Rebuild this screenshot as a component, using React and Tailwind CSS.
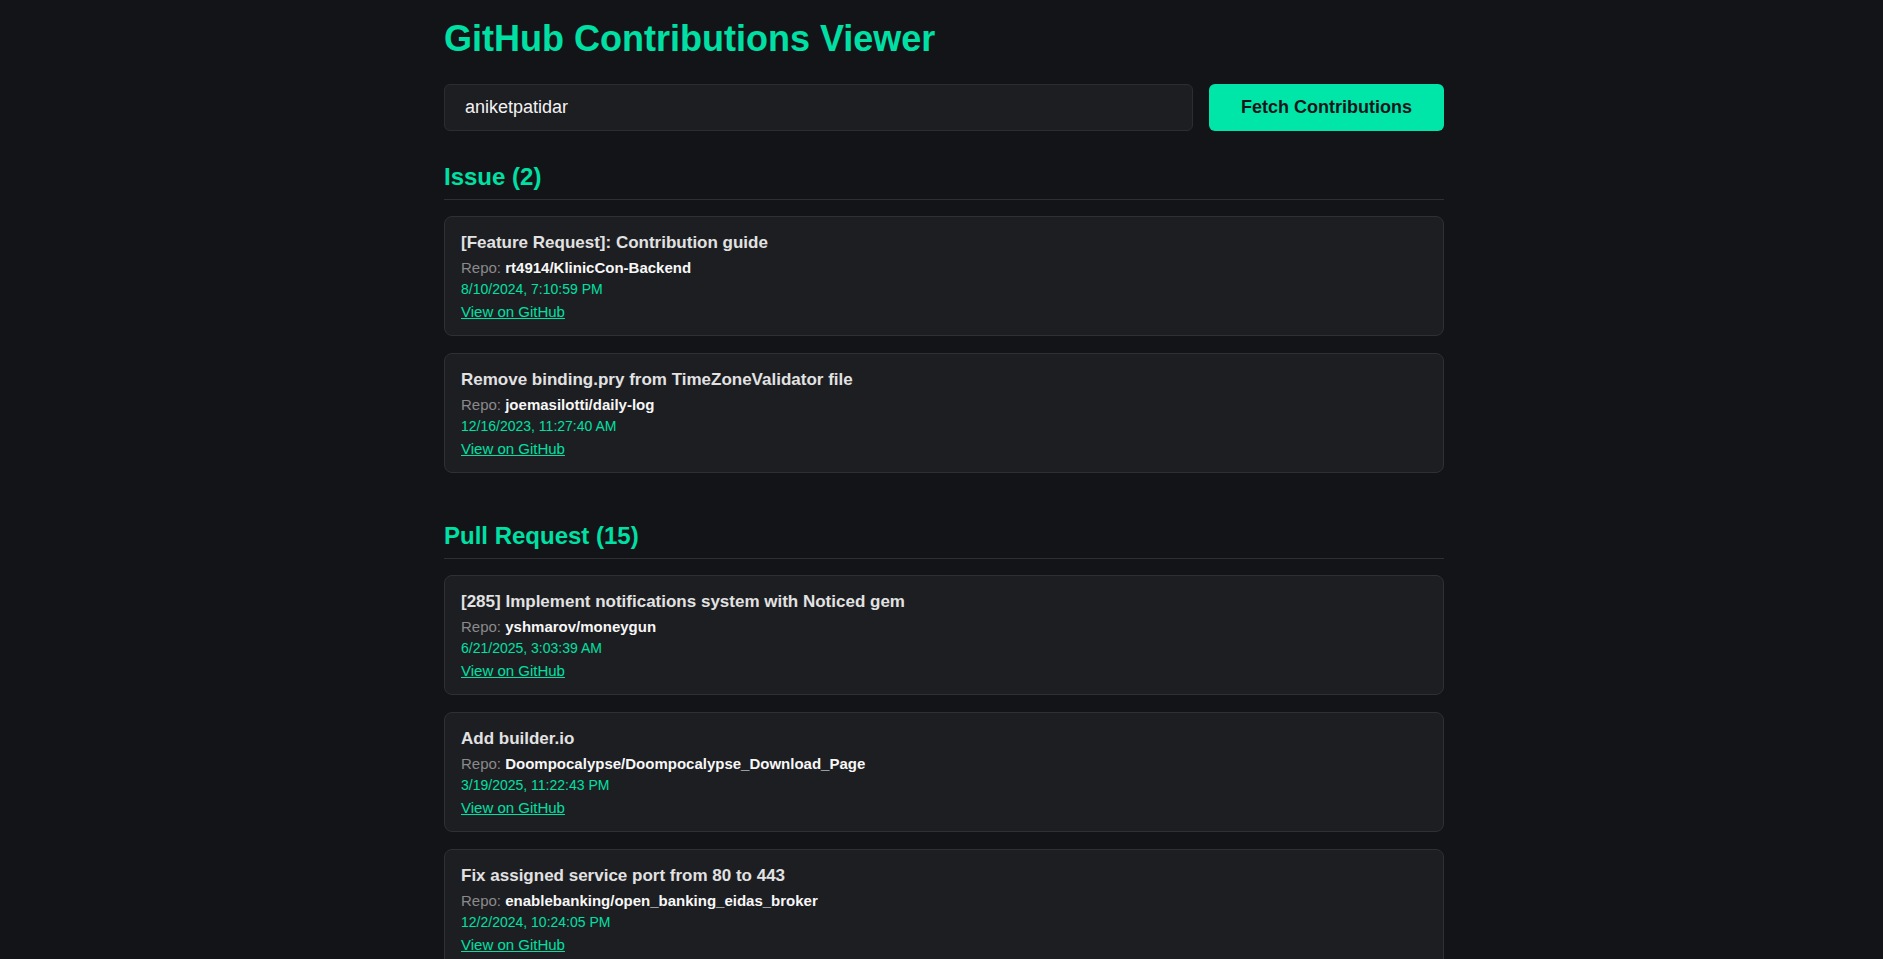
import React from "react";

const issues = [
  {
    title: "[Feature Request]: Contribution guide",
    repo: "rt4914/KlinicCon-Backend",
    date: "8/10/2024, 7:10:59 PM",
  },
  {
    title: "Remove binding.pry from TimeZoneValidator file",
    repo: "joemasilotti/daily-log",
    date: "12/16/2023, 11:27:40 AM",
  },
];

const pulls = [
  {
    title: "[285] Implement notifications system with Noticed gem",
    repo: "yshmarov/moneygun",
    date: "6/21/2025, 3:03:39 AM",
  },
  {
    title: "Add builder.io",
    repo: "Doompocalypse/Doompocalypse_Download_Page",
    date: "3/19/2025, 11:22:43 PM",
  },
  {
    title: "Fix assigned service port from 80 to 443",
    repo: "enablebanking/open_banking_eidas_broker",
    date: "12/2/2024, 10:24:05 PM",
  },
];

function Card({ item }) {
  return (
    <div className="mb-[17px] rounded-lg border border-[#2f3035] bg-[#1d1e22] px-4 pb-[15px] pt-4">
      <h3 className="mb-[6px] text-[17px] font-bold leading-[normal] text-[#e2e2e2]">
        {item.title}
      </h3>
      <p className="mb-[5px] text-[15px] leading-[normal] text-[#8a8a8a]">
        Repo: <strong className="font-bold text-[#f7f7f7]">{item.repo}</strong>
      </p>
      <p className="mb-[6px] text-[14px] leading-[normal] text-[#00e0a4]">
        {item.date}
      </p>
      <a
        href="#"
        className="block w-max text-[15px] leading-[normal] text-[#00e0a4] underline"
      >
        View on GitHub
      </a>
    </div>
  );
}

function Section({ title, items }) {
  return (
    <section className="mb-[47px]">
      <h2 className="mb-4 border-b border-[#2f3035] pb-[8px] pt-[2px] text-[24px] font-bold leading-[normal] text-[#00e0a4]">
        {title}
      </h2>
      {items.map((it, i) => (
        <Card key={i} item={it} />
      ))}
    </section>
  );
}

export default function App() {
  return (
    <div
      className="min-h-screen bg-[#131418] text-white"
      style={{ fontFamily: '"Liberation Sans", Arial, sans-serif' }}
    >
      <div className="mx-auto w-full max-w-[1005px] pl-[5px] pt-[18px]">
        <h1 className="mb-6 text-[36px] font-bold leading-[normal] text-[#00e0a4]">
          GitHub Contributions Viewer
        </h1>
        <div className="mb-[30px] flex gap-4">
          <input
            className="h-[47px] flex-1 rounded-md border border-[#2c2d32] bg-[#1d1e22] px-5 text-[18px] leading-[normal] text-[#f2f2f2] outline-none"
            defaultValue="aniketpatidar"
          />
          <button className="h-[47px] rounded-md bg-[#00e5a8] px-8 text-[18px] font-bold leading-[normal] text-[#15161a]">
            Fetch Contributions
          </button>
        </div>
        <Section title="Issue (2)" items={issues} />
        <Section title="Pull Request (15)" items={pulls} />
      </div>
    </div>
  );
}
